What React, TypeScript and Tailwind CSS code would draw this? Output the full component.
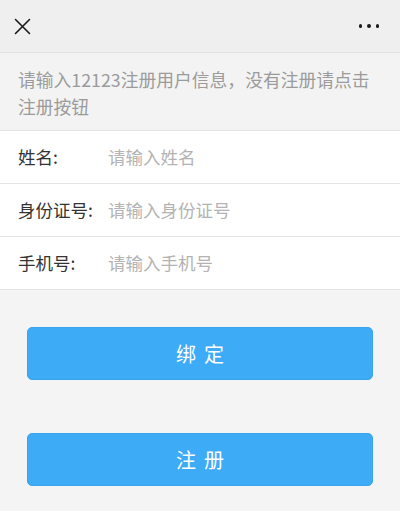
import React from "react";

const font = { fontFamily: '"Noto Sans CJK SC", "Noto Sans", sans-serif' };

function Row({ label, placeholder }: { label: string; placeholder: string }) {
  return (
    <div className="flex h-[53px] items-center border-b border-[#e4e4e4] bg-white pl-[18px]">
      <span className="w-[90px] shrink-0 text-[17.5px] text-[#333333]">{label}</span>
      <span className="text-[17.5px] text-[#b3b3b3]">{placeholder}</span>
    </div>
  );
}

export default function App() {
  return (
    <div className="min-h-[511px] w-[400px] bg-[#f4f4f5]" style={font}>
      <div className="flex h-[53px] items-center justify-between border-b border-[#e2e2e2] bg-[#efefef] pl-[14px] pr-[21px]">
        <svg width="17" height="17" viewBox="0 0 17 17" fill="none" stroke="#1a1a1a" strokeWidth="1.6" strokeLinecap="round">
          <path d="M1.5 1.5L15.5 15.5M15.5 1.5L1.5 15.5" />
        </svg>
        <div className="flex items-center gap-[5px]">
          <span className="block h-[3.5px] w-[3.5px] rounded-full bg-[#1a1a1a]" />
          <span className="block h-[3.5px] w-[3.5px] rounded-full bg-[#1a1a1a]" />
          <span className="block h-[3.5px] w-[3.5px] rounded-full bg-[#1a1a1a]" />
        </div>
      </div>
      <div className="border-b border-[#e4e4e4] bg-[#f3f3f3] pb-[10px] pl-[18px] pr-[20px] pt-[13px] text-[17.8px] leading-[27px] text-[#9b9b9b]">
        请输入12123注册用户信息，没有注册请点击注册按钮
      </div>
      <div className="bg-white">
        <Row label="姓名:" placeholder="请输入姓名" />
        <Row label="身份证号:" placeholder="请输入身份证号" />
        <Row label="手机号:" placeholder="请输入手机号" />
      </div>
      <div className="flex flex-col gap-[53px] px-[27px] pt-[37px]">
        <button className="flex h-[53px] items-center justify-center rounded-[5px] border border-[#38a3ee] bg-[#3eabf7] pl-[8px] text-[20px] tracking-[8px] text-white">
          绑定
        </button>
        <button className="flex h-[53px] items-center justify-center rounded-[5px] border border-[#38a3ee] bg-[#3eabf7] pl-[8px] text-[20px] tracking-[8px] text-white">
          注册
        </button>
      </div>
    </div>
  );
}
